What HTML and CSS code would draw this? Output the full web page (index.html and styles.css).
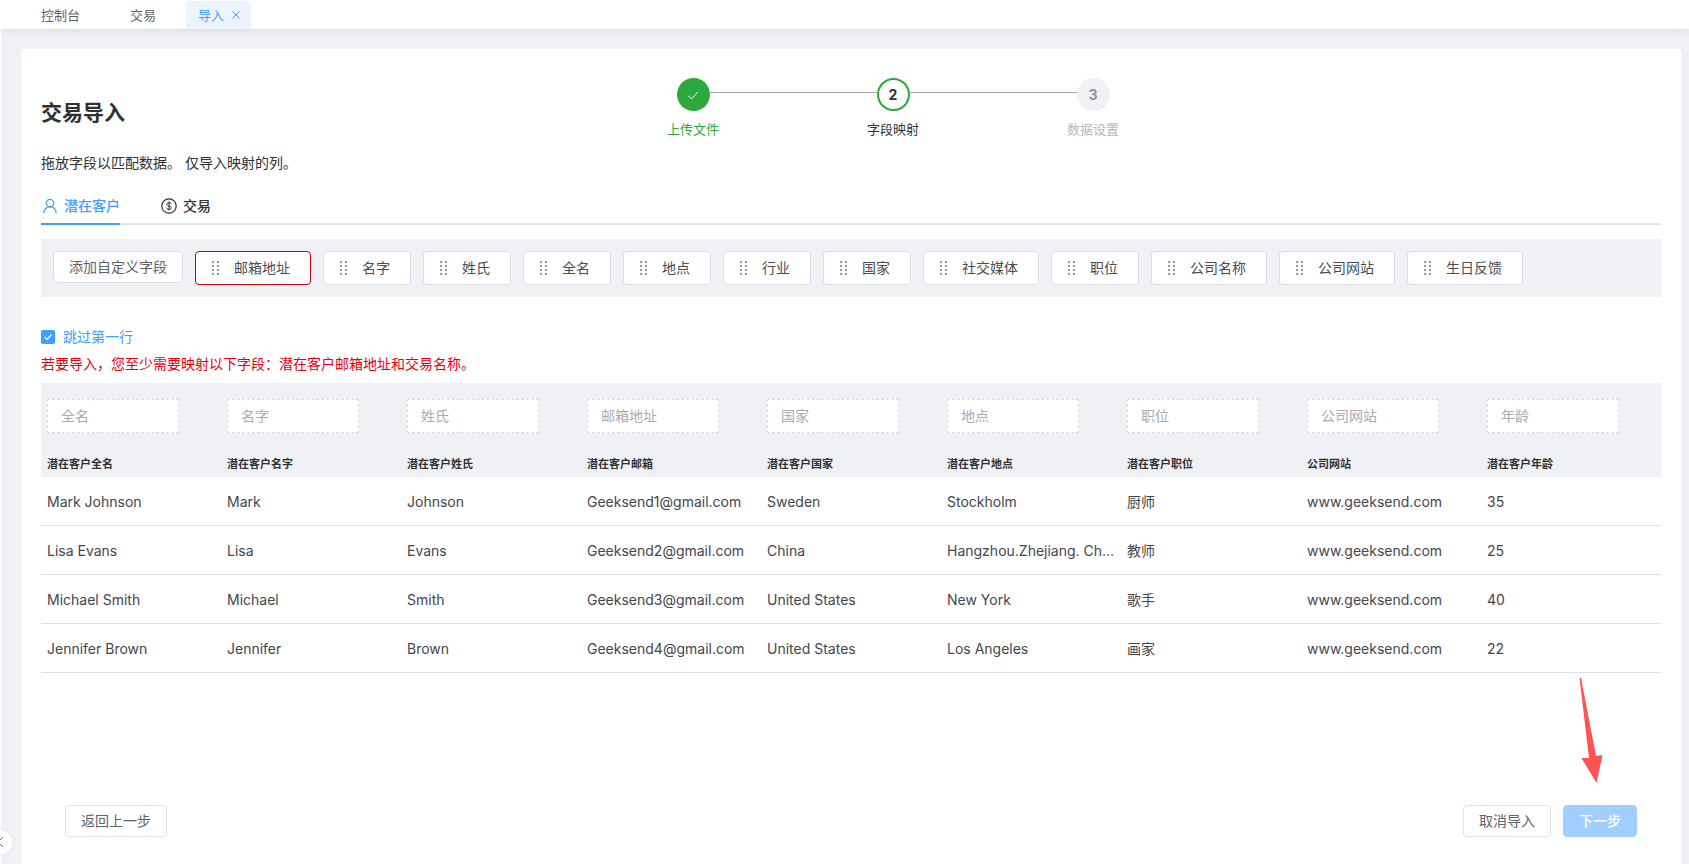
FILE: index.html
```html
<!DOCTYPE html>
<html lang="zh-CN">
 <head>
  <meta charset="utf-8">
  <title>交易导入</title>
  <link rel="stylesheet" href="styles.css">
 </head>
 <body>
  <div class="topbar">
   <a class="toptab">控制台</a>
   <a class="toptab">交易</a>
   <a class="toptab active">导入
    <svg class="close" width="10" height="10" viewBox="0 0 10 10"><path d="M1.5 1.5l7 7M8.5 1.5l-7 7" stroke="#409eff" fill="none"/></svg>
   </a>
  </div>

  <div class="main">
   <div class="card">
    <div class="head">
     <h1 class="title">交易导入</h1>
     <div class="steps">
      <div class="step done">
       <span class="dot"><svg width="14" height="14" viewBox="0 0 14 14"><path d="M2 7.5l3.4 3.4L12 3.8" stroke="#fff" fill="none"/></svg></span>
       <span class="label">上传文件</span>
      </div>
      <div class="step current">
       <span class="dot">2</span>
       <span class="label">字段映射</span>
      </div>
      <div class="step todo">
       <span class="dot">3</span>
       <span class="label">数据设置</span>
      </div>
     </div>
    </div>

    <p class="desc">拖放字段以匹配数据。 仅导入映射的列。</p>

    <div class="tabs">
     <a class="tab active">
      <svg width="16" height="16" viewBox="0 0 16 16"><circle cx="8" cy="5" r="3.7" fill="none" stroke="#409eff" stroke-width="1.2"/><path d="M1.8 15c.3-3.8 2.9-6.2 6.2-6.2s5.900 2.400 6.200 6.200" fill="none" stroke="#409eff" stroke-width="1.200" stroke-linecap="round"/></svg>
      潜在客户
     </a>
     <a class="tab">
      <svg width="16" height="16" viewBox="0 0 16 16"><circle cx="8" cy="8" r="7.2" fill="none" stroke="#303133" stroke-width="1.200"/><path d="M10.300 5.900C10 5 9.100 4.700 8 4.700c-1.300 0-2.300.6-2.300 1.700 0 2.400 4.700 1 4.700 3.300 0 1-1 1.600-2.400 1.600-1.200 0-2.200-.5-2.500-1.500M8 3.400v9.200" fill="none" stroke="#303133"/></svg>
      交易
     </a>
    </div>

    <div class="fields">
     <button class="btn">添加自定义字段</button>
     <div class="chip required"><i class="grip"></i>邮箱地址</div>
     <div class="chip"><i class="grip"></i>名字</div>
     <div class="chip"><i class="grip"></i>姓氏</div>
     <div class="chip"><i class="grip"></i>全名</div>
     <div class="chip"><i class="grip"></i>地点</div>
     <div class="chip"><i class="grip"></i>行业</div>
     <div class="chip"><i class="grip"></i>国家</div>
     <div class="chip"><i class="grip"></i>社交媒体</div>
     <div class="chip"><i class="grip"></i>职位</div>
     <div class="chip"><i class="grip"></i>公司名称</div>
     <div class="chip"><i class="grip"></i>公司网站</div>
     <div class="chip"><i class="grip"></i>生日反馈</div>
    </div>

    <label class="skip">
     <span class="checkbox"><svg width="14" height="14" viewBox="0 0 14 14"><path d="M3.500 7l2.500 2.500 4.500-5" stroke="#fff" stroke-width="1.200" fill="none"/></svg></span>
     跳过第一行
    </label>
    <p class="warn">若要导入，您至少需要映射以下字段：潜在客户邮箱地址和交易名称。</p>

    <table class="grid">
     <thead>
      <tr class="drop">
       <th><div class="zone">全名</div></th>
       <th><div class="zone">名字</div></th>
       <th><div class="zone">姓氏</div></th>
       <th><div class="zone">邮箱地址</div></th>
       <th><div class="zone">国家</div></th>
       <th><div class="zone">地点</div></th>
       <th><div class="zone">职位</div></th>
       <th><div class="zone">公司网站</div></th>
       <th><div class="zone">年龄</div></th>
      </tr>
      <tr class="names">
       <th>潜在客户全名</th>
       <th>潜在客户名字</th>
       <th>潜在客户姓氏</th>
       <th>潜在客户邮箱</th>
       <th>潜在客户国家</th>
       <th>潜在客户地点</th>
       <th>潜在客户职位</th>
       <th>公司网站</th>
       <th>潜在客户年龄</th>
      </tr>
     </thead>
     <tbody>
      <tr>
       <td>Mark Johnson</td><td>Mark</td><td>Johnson</td><td>Geeksend1@gmail.com</td><td>Sweden</td><td>Stockholm</td><td>厨师</td><td>www.geeksend.com</td><td>35</td>
      </tr>
      <tr>
       <td>Lisa Evans</td><td>Lisa</td><td>Evans</td><td>Geeksend2@gmail.com</td><td>China</td><td>Hangzhou.Zhejiang. China</td><td>教师</td><td>www.geeksend.com</td><td>25</td>
      </tr>
      <tr>
       <td>Michael Smith</td><td>Michael</td><td>Smith</td><td>Geeksend3@gmail.com</td><td>United States</td><td>New York</td><td>歌手</td><td>www.geeksend.com</td><td>40</td>
      </tr>
      <tr>
       <td>Jennifer Brown</td><td>Jennifer</td><td>Brown</td><td>Geeksend4@gmail.com</td><td>United States</td><td>Los Angeles</td><td>画家</td><td>www.geeksend.com</td><td>22</td>
      </tr>
     </tbody>
    </table>

    <div class="footer">
     <button class="btn">返回上一步</button>
     <div class="footer-right">
      <button class="btn">取消导入</button>
      <button class="btn primary">下一步</button>
     </div>
    </div>
   </div>
  </div>

  <!-- red arrow drawn over the page, pointing at the next button -->
  <svg class="arrow" width="1689" height="864" viewBox="0 0 1689 864"><polygon points="1579.500,678 1581,678 1596,756 1602.500,755 1596.500,783 1581.500,758 1589,758" fill="#ff5254"/></svg>

  <div class="collapse"><svg width="6" height="12" viewBox="0 0 6 12"><path d="M3 1L-2 6l5 5" fill="none" stroke="#777"/></svg></div>
 </body>
</html>
```

FILE: styles.css
```css
* { box-sizing: border-box; }
html, body { margin: 0; height: 100%; }
body {
  background: #fff;
  color: #303133;
  font: 14px/20px Inter, "Noto Sans CJK SC", sans-serif;
  overflow: hidden;
}
p, h1 { margin: 0; }

.topbar {
  display: flex;
  height: 29px;
  padding: 1px 0 0 23px;
  gap: 14px;
  background: #fff;
  position: relative;
  box-shadow: 0 2px 8px rgba(0, 0, 0, 0.08);
}
.toptab {
  display: flex;
  align-items: center;
  padding: 0 18px;
  font-size: 13px;
  color: #606266;
}
.toptab.active {
  margin-left: -2px;
  padding: 0 10px 0 12px;
  gap: 7px;
  background: #ecf5ff;
  color: #409eff;
  border-radius: 4px 4px 0 0;
}

.main {
  height: 835px;
  margin-left: 1px;
  padding: 20px 8px 0 20px;
  background: #f0f1f5;
}
.card {
  height: 815px;
  padding: 29px 20px 0 20px;
  background: #fff;
  border-radius: 4px 4px 0 0;
}

.head { display: flex; align-items: flex-start; }
.title {
  width: 552px;
  margin-top: 21px;
  font-size: 21px;
  line-height: 28px;
  font-weight: 700;
}
.steps { display: flex; }
.step {
  width: 200px;
  display: flex;
  flex-direction: column;
  align-items: center;
  position: relative;
}
.step + .step::before {
  content: "";
  position: absolute;
  top: 14px;
  left: -84px;
  width: 168px;
  height: 1px;
  background: #a0a3ad;
}
.dot {
  width: 33px;
  height: 33px;
  display: flex;
  align-items: center;
  justify-content: center;
  border-radius: 50%;
  font-weight: 700;
  font-size: 14px;
}
.label { margin-top: 8px; font-size: 13px; }
.done .dot { background: #2da83f; }
.done .label { color: #2da83f; }
.current .dot { border: 2px solid #2da83f; }
.todo .dot { background: #f0f1f5; color: #8e919c; }
.todo .label { color: #b4b6bd; }

.desc { margin-top: 14px; }

.tabs {
  display: flex;
  gap: 41px;
  margin-top: 23px;
  border-bottom: 2px solid #e4e7ed;
}
.tab {
  display: flex;
  align-items: center;
  gap: 6px;
  padding-bottom: 7px;
  margin-bottom: -2px;
  border-bottom: 2px solid transparent;
  font-weight: 500;
}
.tab.active {
  padding-left: 1px;
  color: #409eff;
  border-bottom-color: #409eff;
}

.fields {
  display: flex;
  align-items: flex-start;
  gap: 12px;
  height: 58px;
  margin-top: 14px;
  padding: 12px;
  background: #f0f1f5;
}
.btn {
  height: 32px;
  padding: 0 15px;
  background: #fff;
  border: 1px solid #dcdfe6;
  border-radius: 4px;
  color: #606266;
  font: inherit;
}
.btn.primary {
  width: 74px;
  padding: 0;
  background: #a0cfff;
  border-color: #a0cfff;
  color: #fff;
  font-weight: 500;
}
.chip {
  display: flex;
  align-items: center;
  height: 34px;
  padding: 0 20px 0 16px;
  background: #fff;
  border: 1px solid #dcdfe6;
  border-radius: 4px;
  color: #4a4c52;
}
.chip.required { border-color: #c9000f; }
.grip {
  width: 7px;
  height: 14px;
  margin-right: 15px;
  background: radial-gradient(circle at 1px 1px, #97999f 1px, transparent 1.3px) 0 0 / 5px 4px;
}

.skip {
  display: flex;
  align-items: center;
  gap: 8px;
  margin-top: 30px;
  color: #409eff;
}
.checkbox {
  width: 14px;
  height: 14px;
  display: flex;
  background: #409eff;
  border-radius: 2px;
}
.warn { margin-top: 7px; color: #e60012; }

.grid {
  width: 1620px;
  margin-top: 9px;
  table-layout: fixed;
  border-collapse: separate;
  border-spacing: 0;
}
.grid th, .grid td { padding: 0 4px 0 6px; text-align: left; }
.drop th { padding-top: 16px; background: #f0f1f5; }
.names th {
  padding-top: 23px;
  padding-bottom: 5px;
  background: #f0f1f5;
  font-size: 11px;
  line-height: 16px;
  font-weight: 700;
}
.zone {
  width: 132px;
  height: 34px;
  padding-left: 13px;
  background: #fff;
  border: 1px dashed #dcdde2;
  color: #a8abb2;
  font-weight: 400;
  line-height: 32px;
}
.grid td {
  height: 49px;
  padding-top: 2px;
  border-bottom: 1px solid #dfe0e4;
  color: #44464c;
  white-space: nowrap;
  overflow: hidden;
  text-overflow: ellipsis;
}

.footer {
  display: flex;
  justify-content: space-between;
  margin-top: 132px;
  padding: 0 24px;
}
.footer-right { display: flex; gap: 12px; }

.arrow {
  position: absolute;
  top: 0;
  left: 0;
  pointer-events: none;
}
.collapse {
  position: absolute;
  left: -12px;
  top: 830px;
  width: 24px;
  height: 24px;
  display: flex;
  align-items: center;
  padding-left: 12px;
  background: #fff;
  border-radius: 50%;
  box-shadow: 0 0 4px rgba(0, 0, 0, 0.06);
}
.collapse svg { overflow: visible; }
```
